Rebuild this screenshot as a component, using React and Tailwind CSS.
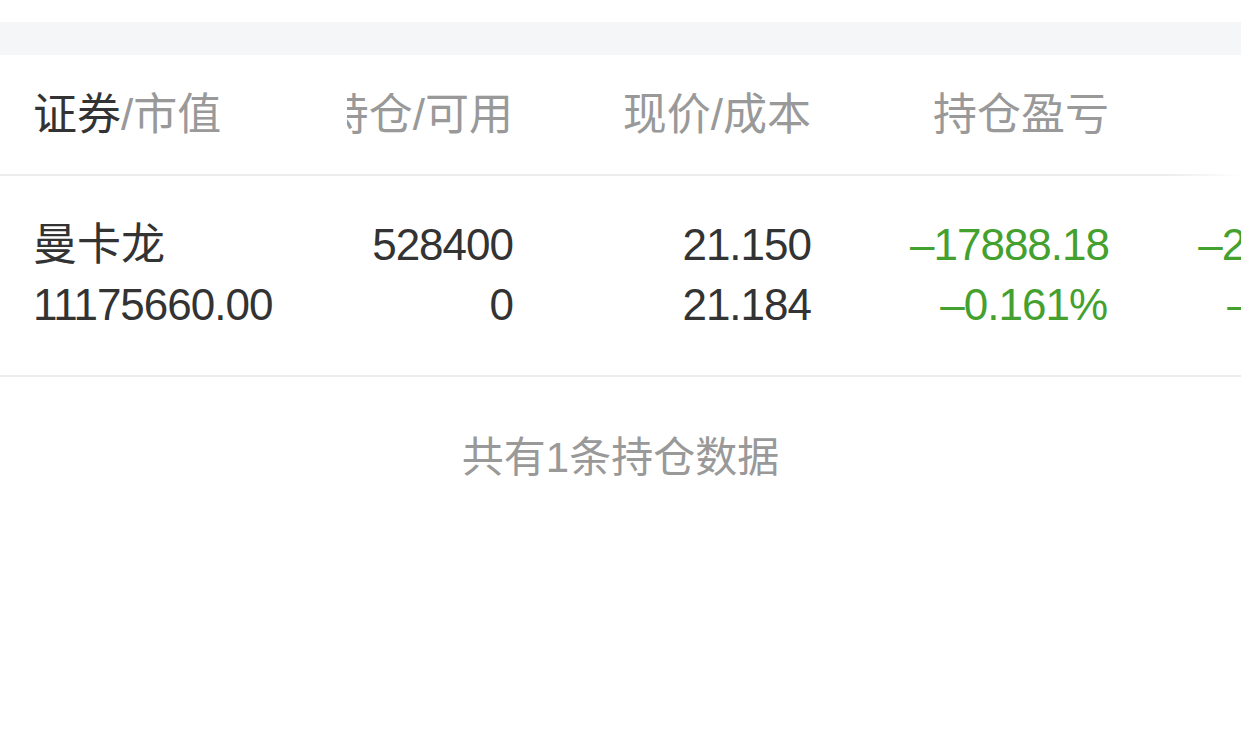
import React from "react";

const positions = [
  {
    name: "曼卡龙",
    value: "11175660.00",
    hold: "528400",
    avail: "0",
    price: "21.150",
    cost: "21.184",
    pnl: "–17888.18",
    pnlRate: "–0.161%",
    today: "–21136.00",
    todayRate: "–0.189%",
  },
];

export default function App() {
  return (
    <div
      className="w-[1241px] h-[729px] overflow-hidden bg-white text-[#333]"
      style={{ fontFamily: "'Liberation Sans', 'Noto Sans CJK SC', sans-serif" }}
    >
      {/* top gap */}
      <div className="h-[22px] bg-white" />
      <div className="h-[33px] bg-[#f5f6f7]" />

      {/* table header */}
      <div className="flex h-[119px] items-center text-[44px] leading-none text-[#999] whitespace-nowrap">
        <div className="w-[347px] shrink-0 pl-[33px]">
          <span className="text-[#333]">证券</span>/市值
        </div>
        <div className="w-[166px] shrink-0 flex justify-end overflow-hidden">
          <span>持仓/可用</span>
        </div>
        <div className="w-[298px] shrink-0 text-right">现价/成本</div>
        <div className="w-[298px] shrink-0 text-right">持仓盈亏</div>
        <div className="w-[285px] shrink-0" />
      </div>
      <div className="h-[2px] bg-[linear-gradient(to_right,#ececec_94%,#ffffff)]" />

      {/* rows */}
      {positions.map((p) => (
        <div
          key={p.name}
          className="flex pt-[39px] pb-[40px] border-b-2 border-[#ececec] text-[44px] leading-[60px] tracking-[-1px] whitespace-nowrap"
        >
          <div className="w-[347px] shrink-0 pl-[33px]">
            <div className="tracking-normal">{p.name}</div>
            <div>{p.value}</div>
          </div>
          <div className="w-[166px] shrink-0 text-right">
            <div>{p.hold}</div>
            <div>{p.avail}</div>
          </div>
          <div className="w-[298px] shrink-0 text-right">
            <div>{p.price}</div>
            <div>{p.cost}</div>
          </div>
          <div className="w-[298px] shrink-0 text-right text-[#44a12f]">
            <div>{p.pnl}</div>
            <div className="pr-[2px]">{p.pnlRate}</div>
          </div>
          <div className="w-[285px] shrink-0 text-right text-[#44a12f]">
            <div>{p.today}</div>
            <div>{p.todayRate}</div>
          </div>
        </div>
      ))}

      {/* footer */}
      <div className="pt-[60px] text-center text-[42px] leading-none text-[#999]">
        共有1条持仓数据
      </div>
    </div>
  );
}
